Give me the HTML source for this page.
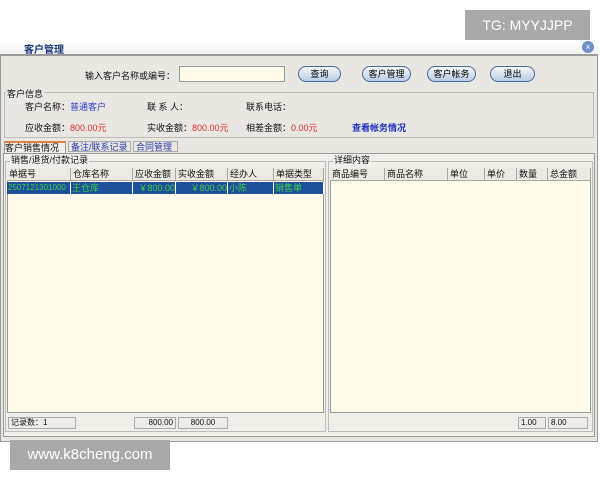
<!DOCTYPE html><html><head><meta charset="utf-8"><style>
*{margin:0;padding:0;box-sizing:border-box}
body{width:600px;height:480px;background:#fff;position:relative;overflow:hidden;font-family:"Liberation Sans","Noto Sans CJK SC",sans-serif;font-size:9px;color:#111}
.a{position:absolute}
.btn{position:absolute;top:66px;height:16px;border:1px solid #4a6a9a;border-radius:8px;background:linear-gradient(#f4f8fc,#b9cce4);font-size:9px;text-align:center;line-height:14px;color:#000}
.hd{position:absolute;height:13px;background:#ece9e2;border-right:1px solid #a8a8a0;border-bottom:1px solid #a8a8a0;line-height:12px;padding-left:2px}
.c{position:absolute;top:182px;height:12px;background:#1e4f9a;color:#3fd24a;line-height:12px;border-right:1px solid #fff;padding-left:1px}
.ft{position:absolute;top:417px;height:12px;border:1px solid #aaa;background:#eeece8;line-height:10px;font-size:8px}
</style></head><body>
<div class="a" style="left:465px;top:10px;width:125px;height:30px;background:#a9a9a9;color:#fff;font-size:14px;line-height:30px;text-align:center">TG: MYYJJPP</div>
<div class="a" style="left:0;top:40px;width:598px;height:402px;background:#e9e7e2;border:1px solid #999"></div>
<div class="a" style="left:0;top:40px;width:598px;height:16px;background:linear-gradient(#fff,#f2f2f2);border-bottom:2px solid #9a9a9a"></div>
<div class="a" style="left:24px;top:41px;font-size:10px;color:#1c3a7a;font-weight:bold">客户管理</div>
<div class="a" style="left:582px;top:41px;width:12px;height:12px;border-radius:6px;background:#6f8fc8;color:#fff;font-size:9px;line-height:12px;text-align:center">×</div>
<div class="a" style="left:85px;top:69px">输入客户名称或编号：</div>
<div class="a" style="left:179px;top:66px;width:106px;height:16px;background:#fffbe8;border:1px solid #999"></div>
<div class="btn" style="left:298px;width:43px">查询</div>
<div class="btn" style="left:362px;width:49px">客户管理</div>
<div class="btn" style="left:427px;width:49px">客户帐务</div>
<div class="btn" style="left:490px;width:45px">退出</div>
<div class="a" style="left:4px;top:92px;width:590px;height:46px;border:1px solid #bbb"></div>
<div class="a" style="left:6px;top:87px;background:#e9e7e2;padding:0 1px">客户信息</div>
<div class="a" style="left:25px;top:100px">客户名称：<span style="color:#2a3ad0">普通客户</span></div>
<div class="a" style="left:147px;top:100px">联 系 人：</div>
<div class="a" style="left:246px;top:100px">联系电话：</div>
<div class="a" style="left:25px;top:121px">应收金额：<span style="color:#e03030">800.00元</span></div>
<div class="a" style="left:147px;top:121px">实收金额：<span style="color:#e03030">800.00元</span></div>
<div class="a" style="left:246px;top:121px">相差金额：<span style="color:#e03030">0.00元</span></div>
<div class="a" style="left:352px;top:121px;color:#1c2ac0;font-weight:bold">查看帐务情况</div>
<div class="a" style="left:4px;top:141px;width:62px;height:12px;border:1px solid #999;border-bottom:none;border-top:2px solid #e0803a;background:#efeee9;line-height:10px">客户销售情况</div>
<div class="a" style="left:68px;top:141px;width:63px;height:11px;border:1px solid #aaa;color:#2a3ab0;line-height:10px;padding-left:2px">备注/联系记录</div>
<div class="a" style="left:133px;top:141px;width:45px;height:11px;border:1px solid #aaa;color:#2a3ab0;line-height:10px;padding-left:2px">合同管理</div>
<div class="a" style="left:3px;top:153px;width:592px;height:284px;border:1px solid #999;background:#efeee9"></div>
<div class="a" style="left:5px;top:161px;width:321px;height:271px;border:1px solid #bbb"></div>
<div class="a" style="left:10px;top:155px;background:#efeee9;padding:0 1px;line-height:11px">销售/退货/付款记录</div>
<div class="a" style="left:7px;top:168px;width:317px;height:245px;background:#fffbea;border:1px solid #999"></div>
<div class="hd" style="left:7px;top:168px;width:64px">单据号</div>
<div class="hd" style="left:71px;top:168px;width:62px">仓库名称</div>
<div class="hd" style="left:133px;top:168px;width:43px">应收金额</div>
<div class="hd" style="left:176px;top:168px;width:52px">实收金额</div>
<div class="hd" style="left:228px;top:168px;width:46px">经办人</div>
<div class="hd" style="left:274px;top:168px;width:50px">单据类型</div>
<div class="c" style="left:7px;width:64px;font-size:8px">2507121301000</div>
<div class="c" style="left:71px;width:62px">王仓库</div>
<div class="c" style="left:133px;width:43px;text-align:right">￥800.00</div>
<div class="c" style="left:176px;width:52px;text-align:right">￥800.00</div>
<div class="c" style="left:228px;width:46px">小陈</div>
<div class="c" style="left:274px;width:50px">销售单</div>
<div class="ft" style="left:8px;width:68px;padding-left:2px">记录数：1</div>
<div class="ft" style="left:134px;width:42px;text-align:right;padding-right:2px">800.00</div>
<div class="ft" style="left:178px;width:50px;text-align:center">800.00</div>
<div class="a" style="left:328px;top:161px;width:265px;height:271px;border:1px solid #bbb"></div>
<div class="a" style="left:333px;top:155px;background:#efeee9;padding:0 1px;line-height:11px">详细内容</div>
<div class="a" style="left:330px;top:168px;width:261px;height:245px;background:#fffbea;border:1px solid #999"></div>
<div class="hd" style="left:330px;top:168px;width:55px">商品编号</div>
<div class="hd" style="left:385px;top:168px;width:63px">商品名称</div>
<div class="hd" style="left:448px;top:168px;width:37px">单位</div>
<div class="hd" style="left:485px;top:168px;width:32px">单价</div>
<div class="hd" style="left:517px;top:168px;width:31px">数量</div>
<div class="hd" style="left:548px;top:168px;width:43px">总金额</div>
<div class="ft" style="left:518px;width:28px;padding-left:2px">1.00</div>
<div class="ft" style="left:548px;width:40px;padding-left:2px">8.00</div>
<div class="a" style="left:10px;top:440px;width:160px;height:30px;background:#a9a9a9;color:#fff;font-size:15px;line-height:30px;text-align:center">www.k8cheng.com</div>
</body></html>
